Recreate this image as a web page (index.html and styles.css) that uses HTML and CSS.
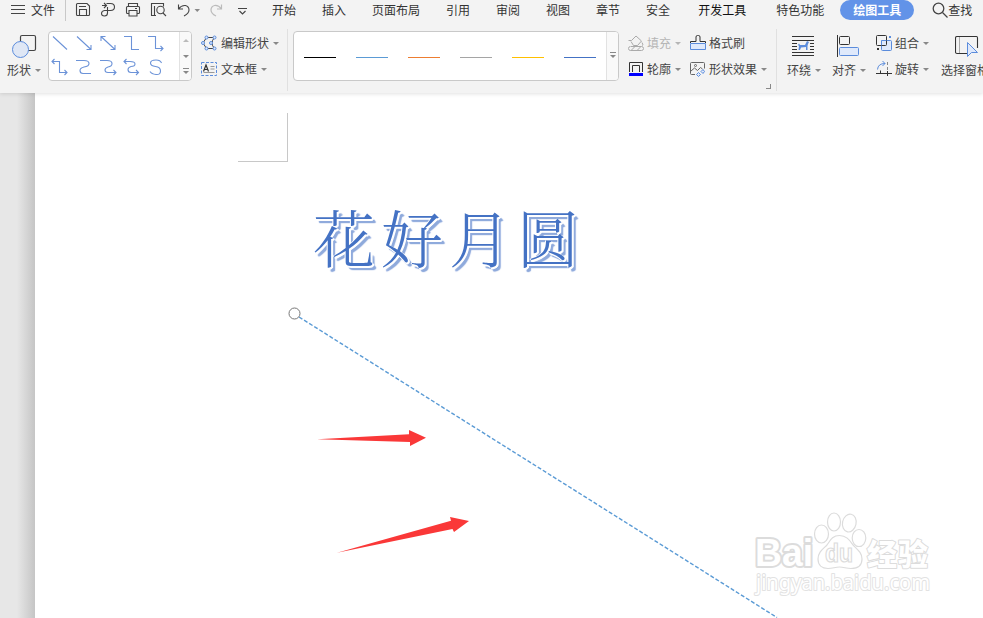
FILE: index.html
```html
<!DOCTYPE html>
<html lang="zh-CN">
<head>
    <meta charset="UTF-8">
    <meta name="viewport" content="width=device-width, initial-scale=1.0">
    <title>文字</title>
    <link rel="stylesheet" href="styles.css">
</head>
<body>

    <header>
        <nav class="menu-bar">
            <div class="file-menu">
                <svg width="14" height="10" viewBox="0 0 14 10"><path d="M0 .5h14M0 4.500h14M0 8.500h14" stroke="#444" fill="none"/></svg>
                <span>文件</span>
            </div>
            <svg class="quick" width="182" height="20" viewBox="70 0 182 20">
                <g class="ink">
                    <path d="M77.500 3.500h9.500l2.500 2.500v8.500q0 1-1 1h-11q-1 0-1-1v-10q0-1 1-1zM79.500 15.500v-6h7v6M79 6.500h7"/>
                    <path d="M102 5.500h4M104 3l2.500 2.500-2.500 2.500M106.500 3.500h4q4 0 4 3.500t-4 3.500h-6M107.500 7v6q0 3-3 3t-3-2.500 3-3"/>
                    <path d="M128.500 6.500v-3h9v3M129 13.500h-1.500q-1 0-1-1v-5q0-1 1-1h11q1 0 1 1v5q0 1-1 1h-1.500M129 10.500h8v5.500h-8zM135 8.500h2"/>
                    <path d="M156 15.500h-4.500v-12h12v3M154.500 6v9"/>
                    <circle cx="160.500" cy="10" r="3.700"/>
                    <path d="M163 13l3 3"/>
                    <path d="M178.500 4.500v4.500h4.500M178.500 9q3-4 7-3.500 3.500 1 3.500 4.500t-5 6"/>
                    <path d="M238 8.500h9M239.500 11l3 3 3-3"/>
                </g>
                <path d="M221.500 4.500v4.500h-4.500M221.500 9q-3-4-7-3.500-3.500 1-3.500 4.500t5 6" fill="none" stroke="#bbb" stroke-width="1.200"/>
                <path d="M194.500 9h5.500l-2.750 3z" fill="#888"/>
            </svg>
            <div class="tabs">
                <span>开始</span>
                <span>插入</span>
                <span>页面布局</span>
                <span>引用</span>
                <span>审阅</span>
                <span>视图</span>
                <span>章节</span>
                <span>安全</span>
                <span class="wide">开发工具</span>
                <span>特色功能</span>
            </div>
            <span class="active-tab">绘图工具</span>
            <div class="search">
                <svg width="16" height="16" viewBox="0 0 16 16"><circle cx="6.500" cy="6.500" r="5.300"/><path d="M10.500 10.500l5 5"/></svg>
                <span>查找</span>
            </div>
        </nav>

        <div class="ribbon">
            <div class="big-button shapes">
                <svg width="26" height="24" viewBox="11 34 26 24">
                    <rect x="20.500" y="35.500" width="15" height="15" rx="1.500" fill="none" stroke="#444" stroke-width="1.200"/>
                    <circle cx="20.500" cy="49.500" r="8" fill="#dfe7f5" stroke="#5b8cdc"/>
                </svg>
                <span class="caret">形状</span>
            </div>

            <div class="gallery shape-gallery">
                <svg width="130" height="48" viewBox="49 32 130 48">
                    <g class="blue">
                        <path d="M53 36.500l14 13M77 36.500l14 13M86.500 49.500h4.500v-4.500"/>
                        <path d="M101 36.500l14 13M101 41v-4.500h4.500M110.500 49.500h4.500v-4.500"/>
                        <path d="M124 36.500h7.500v13h7.500M148 36.500h7.500v12h7.500M160.500 46l2.500 2.500-2.500 2.500"/>
                        <path d="M52 61.500h7.500v11h7.500M54.500 59l-2.500 2.500 2.500 2.500M64.500 70l2.500 2.500-2.500 2.500"/>
                        <path d="M76 60.500h8q5 0 5 3t-5 3.500q-4 1-4 3.500 0 3 3 3h8"/>
                        <path d="M100 60.500h7q5 0 5 3t-4 3.500q-3 1-3 3 0 2.500 3 2.500h8M113.500 70l2.500 2.500-2.500 2.500"/>
                        <path d="M124 61.500h6q5 0 5 2.500t-4 2.500q-3 1-3 3 0 3 3 3h7.500M126.500 59l-2.500 2.500 2.500 2.500M136 70l2.500 2.500-2.500 2.500"/>
                        <path d="M161.500 63q-1-3-5.500-3-5.500 0-5.500 3t5 3.500 5 4.500-4.500 3.500-6-3"/>
                    </g>
                </svg>
                <div class="spinner">
                    <span class="up"></span>
                    <span class="down"></span>
                    <span class="more"></span>
                </div>
            </div>

            <div class="rows edit">
                <div class="row">
                    <svg width="16" height="16" viewBox="0 0 16 16">
                        <path d="M5.500 2.500h8q-5 5.500 0 11h-8L2 8z" fill="none" stroke="#444"/>
                        <g fill="#dfe9fb" stroke="#5b8cdc"><circle cx="5.500" cy="2.500" r="1.500"/><circle cx="13.500" cy="2.500" r="1.500"/><circle cx="2" cy="8" r="1.500"/><circle cx="10" cy="8" r="1.500"/><circle cx="5.500" cy="13.500" r="1.500"/><circle cx="13.500" cy="13.500" r="1.500"/></g>
                    </svg>
                    <span class="caret">编辑形状</span>
                </div>
                <div class="row">
                    <svg width="16" height="16" viewBox="0 0 16 16">
                        <rect x=".5" y="1.500" width="15" height="13" fill="none" stroke="#5b8cdc" stroke-dasharray="3 1.500"/>
                        <path d="M2.500 10.500l2.500-6.500 2.500 6.500M3.500 8.500h3" fill="none" stroke="#333" stroke-width="1.200"/>
                        <path d="M9.500 5.500h4M9.500 8h4M2.500 11.500h11" fill="none" stroke="#999"/>
                    </svg>
                    <span class="caret">文本框</span>
                </div>
            </div>

            <div class="separator"></div>

            <div class="gallery line-gallery">
                <div class="lines">
                    <span class="black"></span>
                    <span class="sky"></span>
                    <span class="orange"></span>
                    <span class="gray"></span>
                    <span class="gold"></span>
                    <span class="navy"></span>
                </div>
                <div class="spinner"><span class="more"></span></div>
            </div>

            <div class="rows fill">
                <div class="row disabled">
                    <svg width="16" height="16" viewBox="0 0 16 16">
                        <path d="M.5 5.500h3L8 1l5.500 5-4 4.500h-4L3 6.500M14 7.500q2 3 0 3M3 11.500h10.500q2 0 2 2t-2 2h-11q-2 0-2-2t2-2M3 15.500l4-4M9 15.500l4-4" fill="none" stroke="#aaa"/>
                    </svg>
                    <span class="caret">填充</span>
                </div>
                <div class="row">
                    <svg width="16" height="16" viewBox="0 0 16 16">
                        <path d="M1.500 11V1.500h13V11M4.500 11V4.500h7V11" fill="none" stroke="#333"/>
                        <rect x="1" y="12" width="14" height="3" fill="#00f"/>
                    </svg>
                    <span class="caret">轮廓</span>
                </div>
            </div>

            <div class="rows effects">
                <div class="row">
                    <svg width="16" height="16" viewBox="0 0 16 16">
                        <path d="M.5 8.500h15v6H.5z" fill="#dfe9fb" stroke="#5b8cdc"/>
                        <path d="M.5 8V6.500h5.500V2q0-1.500 1.500-1.500h1q1.500 0 1.500 1.500v4.500h5.500V8" fill="none" stroke="#333"/>
                    </svg>
                    <span>格式刷</span>
                </div>
                <div class="row">
                    <svg width="16" height="16" viewBox="0 0 16 16">
                        <path d="M5 13.500H1.500q-1 0-1-1v-10q0-1 1-1h12q1 0 1 1v5M1 10l3.500-3 3 2.500 3-3 2 1.500" fill="none" stroke="#666"/>
                        <circle cx="5.500" cy="4.500" r="1" fill="none" stroke="#666"/>
                        <path d="M8.500 11.500l2 2-2 2-2-2zM13 8.500l1.500 2-1.500 2-2-2z" fill="#dfe9fb" stroke="#5b8cdc"/>
                    </svg>
                    <span class="caret">形状效果</span>
                </div>
                <i class="launcher"></i>
            </div>

            <div class="separator"></div>

            <div class="big-button wrap">
                <svg width="22" height="22" viewBox="0 0 22 22">
                    <path d="M0 1.500h22M0 5.500h22M0 8.500h5M18 8.500h4M0 11.500h5M18 11.500h4M0 14.500h5M18 14.500h4M0 17.500h22M0 20.500h22" stroke="#333" fill="none"/>
                    <path d="M7 8.500l1 1.500h5l2-4 2 1-1 2-.5 2v4h-1.500v-3l-5 .5-1 2.500h-1.500l.5-4-1-1z" fill="#5b8cdc"/>
                </svg>
                <span class="caret">环绕</span>
            </div>

            <div class="big-button align">
                <svg width="22" height="22" viewBox="0 0 22 22">
                    <path d="M.5 0v22" stroke="#333"/>
                    <rect x="2.500" y="1.500" width="10" height="8" rx="1" fill="none" stroke="#333"/>
                    <rect x="2.500" y="12.500" width="19" height="8" rx="1" fill="#dfe9fb" stroke="#5b8cdc"/>
                </svg>
                <span class="caret">对齐</span>
            </div>

            <div class="rows arrange">
                <div class="row">
                    <svg width="16" height="16" viewBox="0 0 16 16">
                        <rect x="5.500" y="5.500" width="10" height="10" rx="1" fill="#dfe9fb" stroke="#5b8cdc"/>
                        <rect x=".5" y=".5" width="10" height="10" rx="1" fill="none" stroke="#333"/>
                        <path d="M5.500 10.500v-5h5" fill="none" stroke="#5b8cdc"/>
                        <path d="M13 1h2v2h-2z" fill="#5b8cdc"/><path d="M1 13h2v2H1z" fill="#333"/>
                    </svg>
                    <span class="caret">组合</span>
                </div>
                <div class="row">
                    <svg width="16" height="16" viewBox="0 0 16 16">
                        <path d="M1.500 8.500Q2 2.500 9 2.500M6.500 0L9 2.500 6.500 5" fill="none" stroke="#5b8cdc"/>
                        <path d="M0 12.500h16M4.500 9.500v3M11.500 10v5" fill="none" stroke="#333"/>
                        <path d="M11.500 1v3M11.500 6v3" fill="none" stroke="#888"/>
                    </svg>
                    <span class="caret">旋转</span>
                </div>
            </div>

            <div class="big-button pane">
                <svg width="24" height="22" viewBox="0 0 24 22">
                    <path d="M13 18.500H2q-1.500 0-1.500-1.500V3q0-1.500 1.500-1.500h19.500q1 0 1 1.500v10" fill="none" stroke="#333" stroke-width="1.100"/>
                    <path d="M4.500 2v16" stroke="#aaa"/>
                    <path d="M12.500 7.500v14l4-4h6z" fill="#dfe9fb" stroke="#5b8cdc"/>
                </svg>
                <span>选择窗格</span>
            </div>
        </div>
    </header>

    <main class="workspace">
        <div class="page">
            <div class="margin-corner"></div>
            <h1 class="word-art">花好月圆</h1>
        </div>

        <svg class="drawing" width="983" height="525" viewBox="0 93 983 525">
            <path d="M299 317L777 617.500" class="connector"/>
            <circle cx="294.500" cy="313.500" r="5.500" fill="#fff" stroke="#777"/>
            <path d="M317 439.200L409 434.200V430L426 437.700 410 446V442z" class="arrow"/>
            <path d="M337 552.700L451 520.800 450 517 469 521 454 532 452.500 529z" class="arrow"/>

            <g class="watermark">
                <text x="755" y="566" class="brand" textLength="58" lengthAdjust="spacingAndGlyphs">Bai</text>
                <ellipse cx="821.500" cy="534" rx="7" ry="9"/>
                <ellipse cx="834" cy="522" rx="6.500" ry="9"/>
                <ellipse cx="849.300" cy="523" rx="6.800" ry="9" transform="rotate(12 849 523)"/>
                <ellipse cx="859" cy="538" rx="6.800" ry="8.500"/>
                <path d="M839.500 535.500C847 535.500 850 541 853 545C858 550 862 553 862 559C862 566 857 568.500 851 568.500C846 568.500 844 567 839.500 567C835 567 833 568.500 828 568.500C822 568.500 818 565 818 559C818 552 823 549 827 545C830 541 832 535.500 839.500 535.500z"/>
                <text x="825" y="562" class="du" textLength="28" lengthAdjust="spacingAndGlyphs">du</text>
                <text x="867" y="565" class="cn" textLength="61">经验</text>
                <text x="756" y="590" class="url" textLength="174" lengthAdjust="spacingAndGlyphs">jingyan.baidu.com</text>
            </g>
        </svg>
    </main>

</body>
</html>
```

FILE: styles.css
```css
:root {
    --bar-bg: #f3f3f3;
    --text-color: #444;
    --accent: #6293e8;
    --border: #c9c9c9;
}

* {
    box-sizing: border-box;
}

body {
    margin: 0;
    height: 618px;
    overflow: hidden;
    background: #fff;
    color: var(--text-color);
    font-family: "Noto Sans CJK SC", sans-serif;
    font-size: 12px;
    line-height: 18px;
}

svg {
    display: block;
    flex-shrink: 0;
}

header {
    height: 93px;
    background: var(--bar-bg);
    position: relative;
    z-index: 1;
    box-shadow: 0 1px 4px rgba(0, 0, 0, 0.12);
    overflow: clip;
    overflow-clip-margin: 5px;
}

.menu-bar {
    display: flex;
    height: 20px;
    align-items: center;
    white-space: nowrap;
    color: #333;
}

.file-menu {
    display: flex;
    align-items: center;
    gap: 6px;
    width: 66px;
    height: 22px;
    padding-left: 11px;
    border-right: 1px solid #c8c8c8;
}

.quick {
    margin-left: 4px;
}

.ink {
    fill: none;
    stroke: #444;
    stroke-width: 1.1;
}

.tabs {
    display: flex;
    gap: 26px;
    margin-left: 20px;
}

.tabs .wide {
    margin: 0 4px 0 2px;
    color: #111;
}

.active-tab {
    width: 74px;
    height: 20px;
    margin-left: 16px;
    border-radius: 10px;
    background: var(--accent);
    color: #fff;
    font-weight: bold;
    line-height: 20px;
    text-align: center;
}

.search {
    display: flex;
    align-items: center;
    margin-left: 18px;
}

.search svg {
    fill: none;
    stroke: #444;
    stroke-width: 1.3;
}

.ribbon {
    display: flex;
    height: 73px;
    white-space: nowrap;
}

.big-button {
    display: flex;
    flex-direction: column;
    flex-shrink: 0;
    justify-content: space-between;
    height: 64px;
    padding: 15px 0 5px;
}

.shapes {
    width: 40px;
    padding-top: 14px;
    margin-right: 8px;
    padding-left: 7px;
}

.shapes svg {
    margin-left: 4px;
}

/* small triangle after a label */
.caret::after,
.up,
.down,
.more {
    display: inline-block;
    border: 3px solid transparent;
    border-top-color: #888;
    border-bottom: 0;
}

.caret::after {
    content: "";
    margin-left: 4px;
    vertical-align: 3px;
}

.gallery {
    display: flex;
    flex-shrink: 0;
    height: 50px;
    margin-top: 11px;
    border: 1px solid var(--border);
    border-radius: 4px;
    background: #fff;
    overflow: hidden;
}

.shape-gallery {
    width: 144px;
}

.blue {
    fill: none;
    stroke: #6c93d8;
    stroke-width: 1.1;
}

.spinner {
    display: flex;
    flex: 1;
    flex-direction: column;
    align-items: center;
    justify-content: space-around;
    border-left: 1px solid #e2e2e2;
    background: #f9f9f9;
}

.up {
    border-top: 0;
    border-bottom: 3px solid #bbb;
}

.more {
    position: relative;
}

.more::before {
    content: "";
    position: absolute;
    left: -3px;
    top: -6px;
    width: 6px;
    height: 1px;
    background: #888;
}

.rows {
    display: flex;
    flex-direction: column;
    flex-shrink: 0;
    padding-top: 14px;
    gap: 8px;
}

.row {
    display: flex;
    align-items: center;
    gap: 4px;
    height: 18px;
}

.edit {
    width: 87px;
    margin-left: 9px;
}

.separator {
    flex-shrink: 0;
    width: 1px;
    height: 62px;
    margin-top: 9px;
    background: #e0e0e0;
}

.edit + .separator {
    margin-left: -1px;
}

.line-gallery {
    width: 326px;
    margin-left: 5px;
}

.lines {
    display: flex;
    align-items: center;
    gap: 20px;
    width: 312px;
    padding: 2px 0 0 10px;
}

.lines span {
    width: 32px;
    height: 1px;
}

.black { background: #000; }
.sky { background: #5b9bd5; }
.orange { background: #ed7d31; }
.gray { background: #a5a5a5; }
.gold { background: #ffc000; }
.navy { background: #4472c4; }

.fill {
    width: 62px;
    margin-left: 9px;
}

.fill .row,
.effects .row {
    gap: 3px;
}

.disabled {
    color: #b5b5b5;
}

.disabled .caret::after {
    border-top-color: #b5b5b5;
}

.effects {
    position: relative;
    width: 86px;
}

.launcher {
    position: absolute;
    left: 76px;
    top: 64px;
    width: 5px;
    height: 5px;
    border: solid #888;
    border-width: 0 1px 1px 0;
}

.wrap {
    width: 45px;
    margin-left: 10px;
}

.align {
    width: 44px;
}

.wrap svg,
.align svg {
    margin-left: 5px;
}

.arrange {
    width: 65px;
}

.arrange .row {
    gap: 3px;
}

.pane svg {
    margin-left: 14px;
}

.workspace {
    position: relative;
    height: 525px;
    padding-left: 35px;
    background: linear-gradient(to right, #e7e7e7 17px, #c5c5c5 35px);
}

.page {
    height: 525px;
    padding: 20px 0 0 203px;
    background: #fff;
}

.margin-corner {
    width: 50px;
    height: 49px;
    border: solid #c8c8c8;
    border-width: 0 1px 1px 0;
}

.word-art {
    margin: 35px 0 0 75px;
    font-family: "Noto Serif CJK SC", "Noto Sans CJK SC", serif;
    font-size: 62px;
    font-weight: 300;
    line-height: 80px;
    letter-spacing: 6px;
    color: #4472c4;
    text-shadow: 1px 1px 0 #fff, 2px 1px 0 #fff, 1px 2px 0 #fff, -1px 0 0 #fff,
        3px 3px 1px #8faadc, 4px 4px 1px #8faadc, 3px 4px 1px #8faadc;
}

.drawing {
    position: absolute;
    left: 0;
    top: 0;
}

.connector {
    fill: none;
    stroke: #5b9bd5;
    stroke-width: 1.4;
    stroke-dasharray: 4 2;
}

.arrow {
    fill: #fa3838;
}

.watermark {
    fill: #fff;
    stroke: #dcdcdc;
    stroke-width: 1.2;
}

/* outline sits behind the white fill */
.brand,
.cn,
.url {
    paint-order: stroke;
    stroke-linejoin: round;
}

.brand {
    font: bold 38px "Liberation Sans", sans-serif;
    stroke-width: 4;
}

.du {
    font: bold 25px "Liberation Sans", sans-serif;
}

.cn {
    font: 900 30px "Noto Sans CJK SC", sans-serif;
    stroke-width: 2;
}

.url {
    font: 21px "Noto Sans", sans-serif;
    stroke: #e2e2e2;
    stroke-width: 2;
}
```
